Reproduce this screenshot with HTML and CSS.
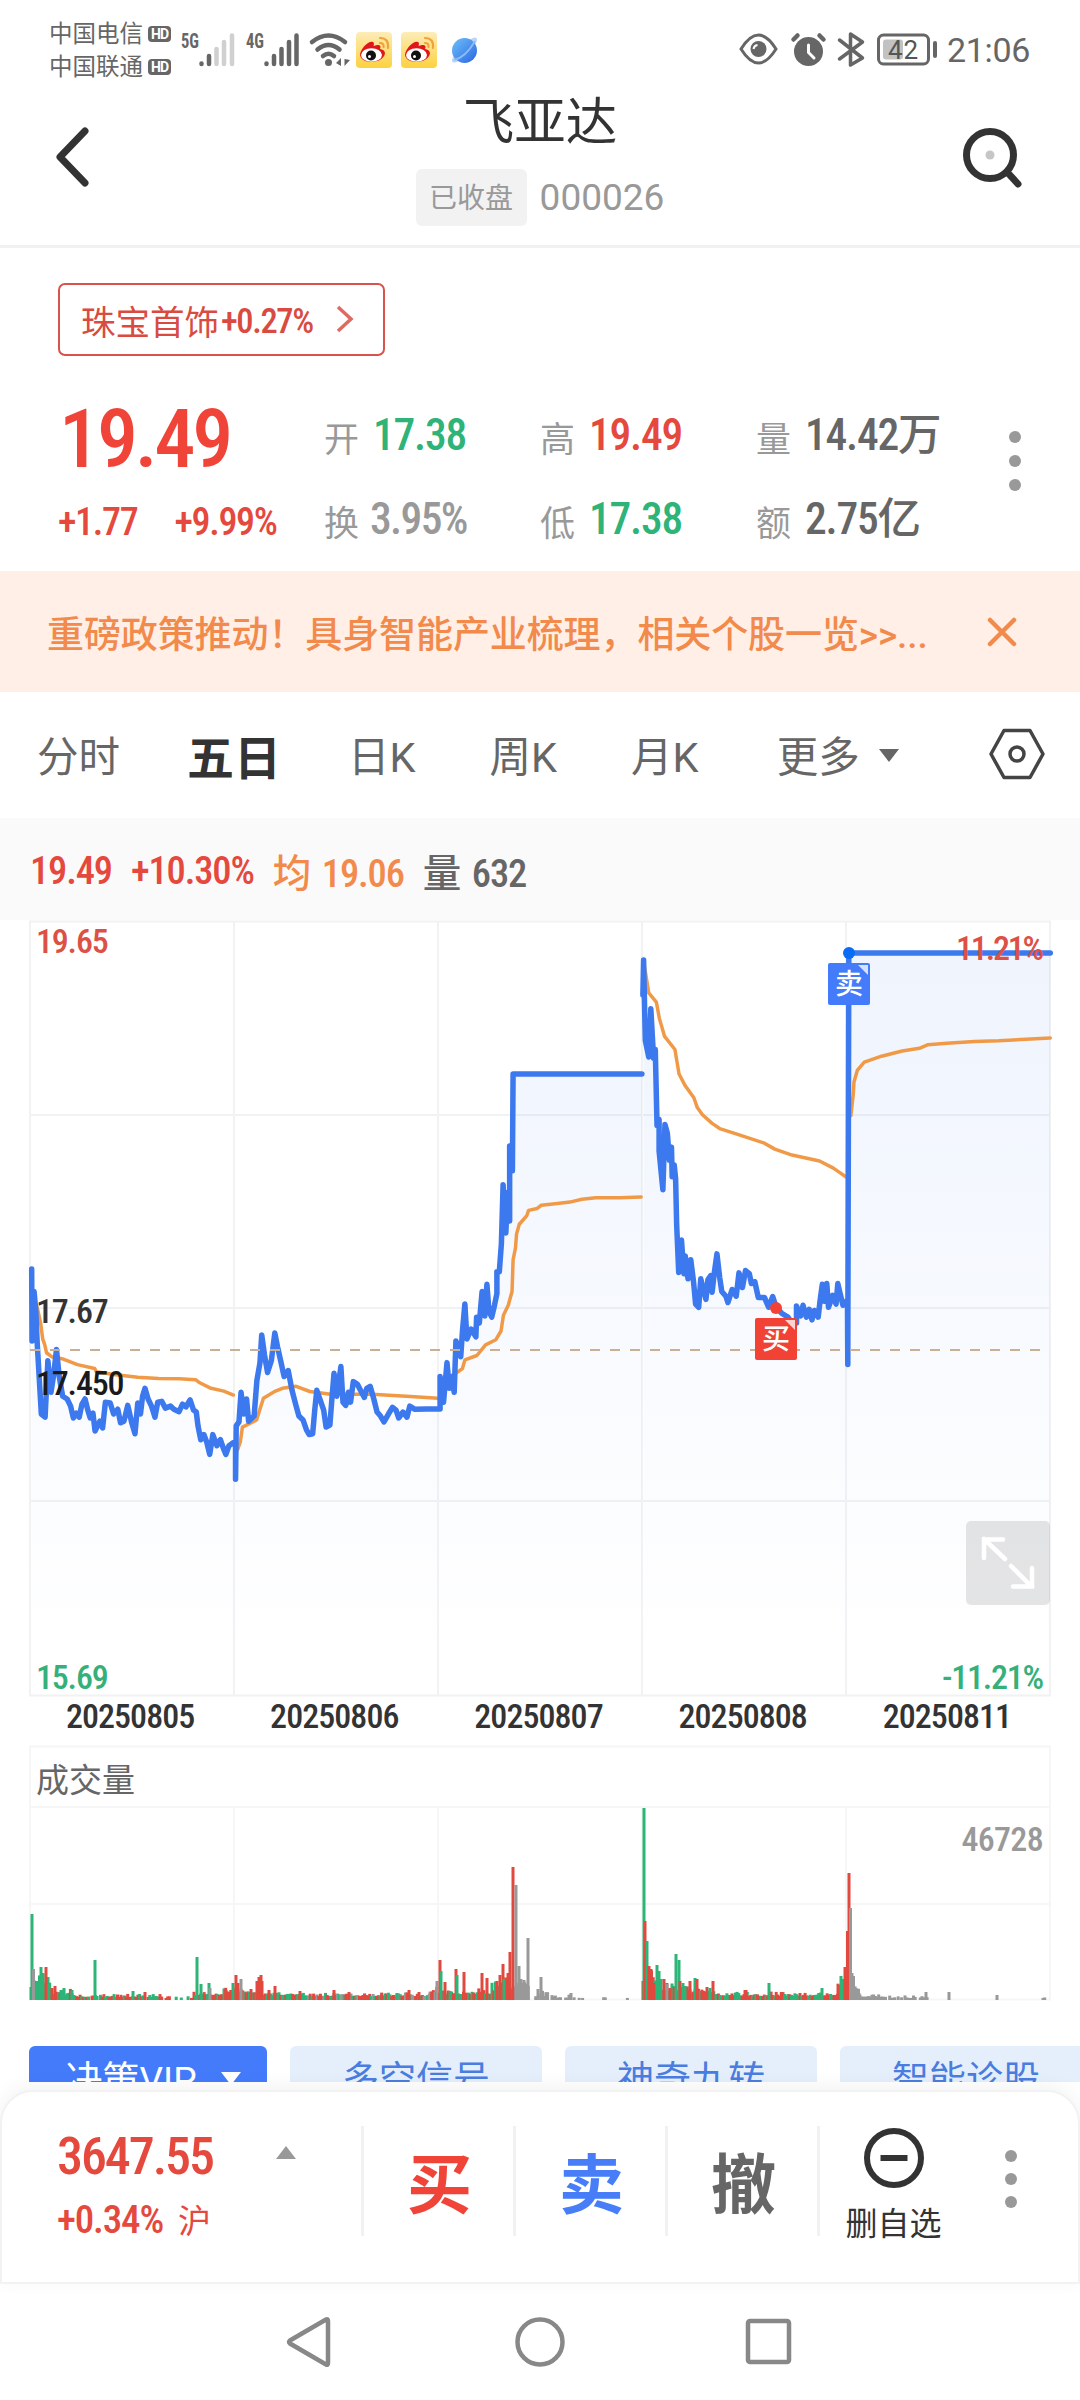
FILE: index.html
```
<!DOCTYPE html>
<html lang="zh-CN">
<head>
    <meta charset="UTF-8">
    <meta name="viewport" content="width=device-width, initial-scale=1.0">
    <title>飞亚达 000026</title>
    <link rel="stylesheet" href="styles.css">
</head>
<body>
    <div class="status-bar">
        <div class="carriers">
            <div class="carrier">中国电信<span class="hd">HD</span></div>
            <div class="carrier">中国联通<span class="hd">HD</span></div>
        </div>
        <svg class="signals" width="310" height="50" viewBox="178 25 310 50">
            <g class="net-label">
                <text x="181" y="48" textLength="18" lengthAdjust="spacingAndGlyphs">5G</text>
                <text x="246" y="48" textLength="18" lengthAdjust="spacingAndGlyphs">4G</text>
            </g>
            <g class="bars">
                <path d="M201.5 63.5V64M209 56V64"/>
                <path class="weak" d="M216.500 49V64M224 42V64M232 35.500V64"/>
                <path d="M266.500 63.500V64M274 56V64M281.500 49V64M289 42V64M296.500 35.500V64"/>
            </g>
            <!-- wifi -->
            <g class="wifi">
                <path d="M312 42Q328.500 29 345 42"/>
                <path d="M317.500 49.500Q328.500 40.500 339.500 49.500"/>
                <path d="M323 56Q328.500 51.500 334 56"/>
                <circle cx="328.500" cy="62.500" r="3.500"/>
                <path class="solid" d="M336 63L341 58V66ZM350 60L344.500 59V66Z"/>
            </g>
            <defs>
                <linearGradient id="wb" x1="0" y1="0" x2="0" y2="1"><stop offset="0" stop-color="#fdecb8"/><stop offset="1" stop-color="#fcd23f"/></linearGradient>
                <linearGradient id="pl" x1="0" y1="0" x2="1" y2="1"><stop offset="0" stop-color="#6ec0fb"/><stop offset="1" stop-color="#2a66e0"/></linearGradient>
                <g id="weibo">
                    <rect width="36" height="36" rx="4" fill="url(#wb)"/>
                    <path d="M4 23C4 17 13 8 17 10C19 11 17 14 18 14C22 12 26 13 24 17C29 18 30 21 28 24C24 32 5 32 4 23Z" fill="#e1161c"/>
                    <ellipse cx="15.500" cy="23" rx="10.500" ry="6.800" fill="#fff"/>
                    <circle cx="15" cy="23.500" r="5" fill="#111"/>
                    <circle cx="13.500" cy="24.500" r="1.500" fill="#fff"/>
                    <path d="M24 6Q33 6 32 16M24 11Q28 11 27.500 15" fill="none" stroke="#f0a33a" stroke-width="2.200" stroke-linecap="round"/>
                </g>
            </defs>
            <use href="#weibo" x="356" y="32"/>
            <use href="#weibo" x="401" y="32"/>
            <ellipse cx="464.500" cy="50" rx="17" ry="5" transform="rotate(-45 464.500 50)" fill="#bcd4fb"/>
            <circle cx="464.500" cy="50.500" r="12.500" fill="url(#pl)"/>
            <path d="M454 60Q466 57 475 41" fill="none" stroke="#8dbcfa" stroke-width="1.800"/>
        </svg>
        <div class="status-right">
            <svg width="200" height="40" viewBox="737 30 200 40">
                <path d="M741 49Q758.500 21 776 49Q758.500 77 741 49Z" fill="none" stroke="#666" stroke-width="3"/>
                <circle cx="758.500" cy="49" r="8" fill="#666"/>
                <path d="M753.500 49Q754 45.500 757.500 45" fill="none" stroke="#fff" stroke-width="2"/>
                <circle cx="808.500" cy="51.500" r="14.500" fill="#666"/>
                <path d="M793.500 39.500L797.500 35.500M823.500 39.500L819.500 35.500" stroke="#666" stroke-width="4.500" stroke-linecap="round"/>
                <path d="M808.500 45V52.500L814 58" fill="none" stroke="#fff" stroke-width="3" stroke-linecap="round"/>
                <path d="M839.500 40L862.500 58L850.500 65V34L862.500 42L839.500 59" fill="none" stroke="#666" stroke-width="3.500" stroke-linejoin="round" stroke-linecap="round"/>
                <rect x="878.500" y="35" width="50" height="29" rx="5" fill="none" stroke="#666" stroke-width="3"/>
                <rect x="883" y="39.500" width="20" height="20" rx="3" fill="#c2c2c2"/>
                <rect x="933" y="41" width="4" height="17" rx="2" fill="#666"/>
                <text x="888" y="58.500" class="battery" textLength="30">42</text>
            </svg>
            <span class="clock">21:06</span>
        </div>
    </div>

    <div class="header">
        <svg class="icon-back" width="40" height="66" viewBox="0 0 40 66">
            <path d="M32 7L7 33L32 59"/>
        </svg>
        <div class="title">
            <div class="name">飞亚达</div>
            <div class="sub"><span class="tag">已收盘</span><span class="code">000026</span></div>
        </div>
        <svg class="icon-search" width="64" height="66" viewBox="0 0 64 66">
            <circle cx="29" cy="31" r="23.500"/>
            <path d="M46 48L57 60"/>
            <circle class="dot" cx="29" cy="31" r="4.500"/>
        </svg>
    </div>

    <div class="quote">
        <div class="sector">
            <span>珠宝首饰</span><span class="num">+0.27%</span>
            <svg width="20" height="30" viewBox="0 0 20 30"><path d="M3 3L16 15L3 27"/></svg>
        </div>
        <div class="quote-grid">
            <div class="price num red">19.49</div>
            <div class="cell"><span>开</span><b class="num green">17.38</b></div>
            <div class="cell"><span>高</span><b class="num red">19.49</b></div>
            <div class="cell"><span>量</span><b class="num">14.42万</b></div>
            <div class="change num red"><span>+1.77</span><span>+9.99%</span></div>
            <div class="cell"><span>换</span><b class="num grey">3.95%</b></div>
            <div class="cell"><span>低</span><b class="num green">17.38</b></div>
            <div class="cell"><span>额</span><b class="num">2.75亿</b></div>
            <div class="dots"><i></i><i></i><i></i></div>
        </div>
    </div>

    <div class="banner">
        <span>重磅政策推动！具身智能产业梳理，相关个股一览&gt;&gt;...</span>
        <svg width="30" height="30" viewBox="0 0 30 30"><path d="M3 3L27 27M27 3L3 27"/></svg>
    </div>

    <div class="tabs">
        <span>分时</span>
        <span class="active">五日</span>
        <span>日K</span>
        <span>周K</span>
        <span>月K</span>
        <span class="more">更多<svg width="22" height="15" viewBox="0 0 22 15"><path d="M1 1H21L11 14Z"/></svg></span>
        <svg class="icon-hex" width="58" height="54" viewBox="0 0 58 54">
            <path d="M16 3.500H42L55 27L42 50.500H16L3 27Z"/>
            <circle cx="29" cy="27" r="7"/>
        </svg>
    </div>

    <div class="info num">
        <span class="red">19.49</span>
        <span class="red">+10.30%</span>
        <span class="orange">均 19.06</span>
        <span>量 632</span>
    </div>

    <div class="chart">
        <svg width="1080" height="778" viewBox="0 920 1080 778">
            <defs>
                <linearGradient id="fade" gradientUnits="userSpaceOnUse" x1="0" y1="100" x2="0" y2="1900">
                    <stop offset="0" stop-color="#3c78ee" stop-opacity=".085"/>
                    <stop offset="1" stop-color="#3c78ee" stop-opacity="0"/>
                </linearGradient>
            </defs>
            <path class="grid" d="M30 921.500H1050V1695.500H30ZM30 1115H1050M30 1308H1050M30 1501H1050M234 921.500V1695M438 921.500V1695M642 921.500V1695M846 921.500V1695"/>
            <g id="price" transform="translate(0 900) scale(.34435 .39541)"></g>
            <path class="base-line" d="M30 1350H1050"/>
            <text x="36" y="953" class="label red-t">19.65</text>
            <text x="36" y="1323" class="label dark">17.67</text>
            <text x="36" y="1394.500" class="label black">17.450</text>
            <text x="36" y="1689" class="label green-t">15.69</text>
            <text x="1043" y="960" class="label end red-t" textLength="87">11.21%</text>
            <text x="1043" y="1689" class="label end green-t" textLength="101">-11.21%</text>
            <circle cx="849" cy="953" r="6" fill="#0a6cf5"/>
            <g>
                <rect x="828" y="963" width="42" height="42" rx="2" fill="#437bfb"/>
                <path d="M858 965H868V975Z" fill="#d5e2ff"/>
                <text x="849" y="994" class="mark">卖</text>
            </g>
            <circle cx="776" cy="1308" r="6" fill="#f24236"/>
            <g>
                <rect x="755" y="1318" width="42" height="42" rx="2" fill="#f24236"/>
                <path d="M785 1320H795V1330Z" fill="#fbd3d0"/>
                <text x="776" y="1349" class="mark">买</text>
            </g>
            <rect x="966" y="1521" width="84" height="84" rx="5" fill="#000" fill-opacity=".1"/>
            <path class="expand" d="M1005 1559L984 1539M1003 1539.500H984V1558M1011 1566L1031 1586M1013 1586.500H1032V1568"/>
        </svg>
    </div>
    <div class="dates num">
        <span>20250805</span><span>20250806</span><span>20250807</span><span>20250808</span><span>20250811</span>
    </div>

    <div class="volume">
        <svg width="1080" height="258" viewBox="0 1744 1080 258">
            <path class="grid light" d="M30 1746.500H1050V1999.500H30ZM30 1807H1050M30 1904H1050M234 1807V2000M438 1807V2000M642 1807V2000M846 1807V2000"/>
            <text x="36" y="1792" class="vol-title">成交量</text>
            <text x="1043" y="1851" class="label end grey-t">46728</text>
            <g id="volume"></g>
        </svg>
    </div>

    <div class="tools">
        <div class="tool vip">决策VIP<svg width="22" height="15" viewBox="0 0 22 15"><path d="M1 1H21L11 14Z"/></svg></div>
        <div class="tool">多空信号</div>
        <div class="tool">神奇九转</div>
        <div class="tool">智能诊股</div>
    </div>

    <div class="bottom-bar">
        <div class="index">
            <div class="index-top"><span class="num red">3647.55</span>
                <svg width="22" height="15" viewBox="0 0 22 15"><path d="M11 1L21 14H1Z"/></svg></div>
            <div class="index-sub num red">+0.34%<span>沪</span></div>
        </div>
        <div class="action buy">买</div>
        <div class="action sell">卖</div>
        <div class="action cancel">撤</div>
        <div class="remove">
            <svg width="62" height="62" viewBox="0 0 62 62"><circle cx="31" cy="31" r="27"/><path d="M17.500 31H44.500"/></svg>
            <span>删自选</span>
        </div>
        <div class="dots"><i></i><i></i><i></i></div>
    </div>

    <div class="nav-bar">
        <svg width="54" height="60" viewBox="0 0 54 60"><path d="M42 7.500Q44 6.500 44 9V51Q44 53.500 42 52.500L6 31.500Q4 30 6 28.500Z"/></svg>
        <svg width="54" height="60" viewBox="0 0 54 60"><circle cx="27" cy="30" r="22.500"/></svg>
        <svg width="54" height="60" viewBox="0 0 54 60"><rect x="6" y="9" width="41" height="41" rx="2"/></svg>
    </div>

    <script>
        const NS = 'http://www.w3.org/2000/svg';
        const BOTTOM = 2012;

        // price lines, a new string starts where the line breaks
        const prices = [
            '92,933 93,1115 99,990 104,1040 108,1120 114,1210 120,1300 131,1308 139,1165 148,1245 156,1200 164,1137 172,1205 182,1255 195,1262 205,1280 213,1310 222,1298 230,1308 238,1275 247,1262 255,1290 262,1310 270,1298 276,1343 290,1318 298,1335 306,1270 320,1272 330,1300 342,1288 350,1322 360,1318 371,1278 382,1320 392,1350 400,1272 408,1300 414,1255 421,1235 430,1262 440,1280 450,1308 458,1270 470,1268 480,1285 495,1280 505,1288 520,1294 530,1275 540,1282 552,1264 562,1290 570,1295 575,1330 583,1365 592,1352 600,1370 609,1402 618,1352 630,1380 640,1365 648,1385 656,1402 665,1380 678,1372 684,1376 684,1465 686,1330 694,1320 700,1245 708,1300 716,1262 722,1318 738,1305 746,1215 755,1170 760,1100 768,1150 777,1195 788,1165 798,1095 806,1130 815,1165 825,1205 837,1190 848,1240 860,1280 868,1305 880,1315 890,1340 898,1352 908,1350 914,1290 920,1240 930,1265 940,1290 947,1333 958,1328 964,1260 970,1197 978,1255 990,1180 996,1270 1004,1278 1012,1245 1018,1270 1026,1218 1038,1225 1050,1245 1058,1258 1065,1235 1075,1230 1085,1260 1095,1295 1105,1305 1115,1320 1128,1300 1140,1283 1150,1290 1158,1310 1170,1295 1182,1308 1190,1280 1205,1288 1240,1287 1278,1287 1278,1205 1288,1270 1298,1170 1305,1235 1312,1205 1319,1245 1324,1115 1338,1155 1343,1090 1350,1022 1356,1110 1368,1085 1382,1105 1384,1055 1392,1070 1400,990 1408,1052 1414,972 1420,1040 1428,1055 1436,1025 1443,995 1443,940 1450,940 1456,870 1461,720 1469,842 1474,740 1480,812 1480,622 1488,685 1490,440 1864,440',
            '1869,152 1867,240 1869,152 1874,355 1884,397 1890,275 1898,400 1903,378 1908,570 1914,555 1914,635 1925,733 1931,568 1938,590 1944,658 1950,625 1952,700 1958,670 1962,705 1965,820 1971,942 1979,860 1986,945 1990,900 1998,958 2006,910 2014,965 2020,1022 2029,1030 2035,958 2050,1010 2056,960 2064,950 2068,992 2074,945 2082,895 2090,955 2096,990 2108,1002 2114,1018 2126,985 2138,1002 2146,943 2156,980 2165,937 2176,945 2182,970 2192,965 2202,1005 2220,1005 2232,1030 2244,1003 2254,1030 2270,1045 2288,1055 2300,1070 2313,1070 2313,1027 2325,1052 2332,1025 2342,1055 2350,1035 2358,1062 2365,1038 2376,1055 2382,1010 2388,972 2394,1015 2401,970 2406,1030 2418,1000 2428,1022 2433,970 2441,1000 2448,1025 2461,1012 2462,1175 2465,134 3050,134'
        ];
        const averages = [
            '108,1030 118,1070 124,1110 130,1125 135,1145 150,1155 180,1160 225,1175 275,1185 280,1193 330,1200 400,1207 460,1210 520,1211 568,1213 580,1221 610,1234 650,1242 678,1252',
            '690,1390 698,1370 704,1333 745,1315 765,1260 800,1242 820,1235 860,1230 900,1243 960,1250 1080,1250 1180,1255 1272,1260',
            '1290,1215 1330,1193 1343,1185 1350,1163 1385,1152 1410,1125 1440,1112 1455,1090 1462,1050 1476,1025 1487,990 1490,910 1497,880 1500,845 1508,820 1530,798 1535,785 1560,780 1572,772 1625,767 1655,764 1690,757 1730,753 1800,753 1862,751',
            '1872,170 1884,235 1906,258 1915,300 1930,345 1960,378 1972,440 1990,470 2015,500 2025,525 2040,543 2068,565 2090,578 2140,592 2220,615 2250,630 2300,645 2380,660 2420,678 2440,690 2456,700',
            '2471,545 2478,490 2480,460 2490,430 2510,410 2560,395 2620,382 2670,375 2695,366 2750,362 2830,358 2900,356 2980,352 3050,349'
        ];

        function add(parent, tag, attrs) {
            const el = document.createElementNS(NS, tag);
            for (const key in attrs) el.setAttribute(key, attrs[key]);
            parent.appendChild(el);
        }

        const priceGroup = document.getElementById('price');
        prices.forEach(p => {
            const pts = p.split(' ');
            const first = pts[0].split(',')[0];
            const last = pts[pts.length - 1].split(',')[0];
            add(priceGroup, 'polygon', { points: `${first},${BOTTOM} ${p} ${last},${BOTTOM}`, fill: 'url(#fade)' });
        });
        averages.forEach(p => add(priceGroup, 'polyline', { points: p, class: 'avg' }));
        prices.forEach(p => add(priceGroup, 'polyline', { points: p, class: 'price-line' }));

        // volume: quiet minutes first, then the larger bars on top of them
        const colors = { r: '#e1493f', g: '#2cb577', n: '#999999' };
        const volumeGroup = document.getElementById('volume');
        let seed = 7;
        function rnd() {
            seed = (seed * 16807) % 2147483647;
            return seed / 2147483647;
        }
        function bar(x, h, c) {
            add(volumeGroup, 'path', { d: `M${x} 2000V${2001 - h}`, stroke: colors[c], class: 'bar' });
        }
        // from, to, lowest, highest, share of minutes drawn, colours
        const quiet = [
            [31, 50, 14, 26, 1, 'ggr'], [50, 75, 6, 12, 1, 'ggr'], [75, 163, 4, 7, .95, 'rg'],
            [166, 192, 3, 5, .5, 'rg'], [194, 224, 6, 9, 1, 'rgr'], [224, 262, 8, 14, 1, 'rgr'],
            [262, 300, 6, 9, 1, 'rg'], [300, 430, 5, 9, 1, 'rgrgn'], [430, 438, 9, 15, 1, 'nr'],
            [438, 492, 7, 12, 1, 'rgr'], [492, 512, 10, 26, 1, 'rrg'], [513, 530, 12, 24, 1, 'n'],
            [534, 548, 4, 10, .7, 'n'], [552, 584, 3, 7, .7, 'n'], [590, 636, 3, 4, .2, 'n'],
            [643, 655, 20, 38, 1, 'rg'], [655, 690, 10, 20, 1, 'rgg'], [690, 715, 8, 13, 1, 'rg'],
            [715, 838, 5, 9, 1, 'rggr'], [838, 848, 12, 26, 1, 'rgr'], [850, 860, 10, 20, 1, 'n'],
            [860, 886, 4, 7, 1, 'n'], [888, 930, 3, 7, .6, 'n'], [930, 1040, 2, 3, .04, 'n'], [1043, 1051, 3, 4, .8, 'n']
        ];
        quiet.forEach(([from, to, lo, hi, share, set]) => {
            for (let x = from; x < to; x += 1.7) {
                const h = lo + rnd() * rnd() * (hi - lo) * 1.3;
                const c = set[Math.floor(rnd() * set.length)];
                if (rnd() < share) bar(x.toFixed(1), h.toFixed(1), c);
            }
        });
        const peaks = 'g32:87 n33.5:32 g37:20 g41:34 g43:28 r46:34 g49:17 r52:13 r55:15 g61:11 g64:13 g72:11 g95:41 g133:10 r145:9 g197:44 g201:17 g209:18 n210:13 r226:11 g233:18 r236:26 r238:18 n241:22 r251:12 r257:20 r259:24 r261:26 r262:20 r269:11 r275:15 r300:10 r334:11 r349:9 g397:8 r409:11 r419:9 n437:20 r440:41 g441:30 r445:19 g450:10 r456:32 g457:26 r464:29 r482:28 r487:23 r497:20 r500:26 r503:37 g504:22 r508:28 r510:49 r513:134 n516:116 n519:35 n521:22 n524:21 n526:17 n528:63 n538:12 n541:24 n571:8 g644:193 r645:80 g647:60 r649:35 r651:32 r654:18 g657:36 g659:30 g661:22 r664:22 n667:17 r670:13 r674:14 g676:47 g679:41 r680:20 g683:18 g685:15 r690:20 g695:23 r697:22 r707:14 g710:13 r713:20 r745:11 r746:11 g769:18 g822:13 g841:25 g843:22 r845:34 r847.5:70 r849:128 n850.500:93 n852:28 n853.500:25 n856:13 n859:8 n926:9 n949:9 n997:6';
        peaks.split(' ').forEach(p => {
            const [x, h] = p.slice(1).split(':').map(Number);
            bar(x, h, p[0]);
        });
    </script>
</body>
</html>
```
FILE: styles.css
```
* {
    box-sizing: border-box;
}
body {
    margin: 0;
    width: 1080px;
    height: 2400px;
    overflow: hidden;
    display: flex;
    flex-direction: column;
    background-color: #fff;
    color: #666;
    font-family: Roboto, "Noto Sans CJK SC", sans-serif;
}
body > div {
    flex: none;
}
svg {
    display: block;
    flex: none;
}
.num {
    font-family: "Roboto Condensed", "Noto Sans CJK SC", sans-serif;
    font-weight: 500;
    letter-spacing: -0.03em;
}
.red { color: #e5483d; }
.green { color: #2eb378; }
.grey { color: #999; }
.orange { color: #f28a4c; }

/* status bar */
.status-bar {
    height: 92px;
    display: flex;
    align-items: center;
    padding: 8px 49px 0 49px;
}
.carriers {
    width: 129px;
    padding-top: 1px;
    font-size: 23.5px;
}
.carrier {
    display: flex;
    align-items: center;
    gap: 5px;
    height: 33px;
    line-height: 33px;
    white-space: nowrap;
}
.hd {
    width: 23px;
    height: 16px;
    border-radius: 4px;
    background-color: #666;
    color: #fff;
    font-size: 14px;
    font-weight: 700;
    line-height: 17px;
    text-align: center;
    letter-spacing: -1px;
}
.net-label text {
    font-family: "Roboto Condensed", sans-serif;
    font-size: 20px;
    font-weight: 700;
    fill: #666;
}
.bars path {
    stroke: #666;
    stroke-width: 4.5;
    stroke-linecap: round;
}
.bars .weak {
    stroke: #d0d0d0;
}
.wifi path {
    fill: none;
    stroke: #666;
    stroke-width: 4.5;
    stroke-linecap: round;
}
.wifi circle, .wifi .solid {
    fill: #666;
    stroke: none;
}
.status-right {
    margin-left: auto;
    display: flex;
    align-items: center;
    gap: 10px;
}
.battery {
    font-size: 26px;
    fill: #555;
}
.clock {
    font-size: 34px;
    line-height: 40px;
    width: 84px;
    letter-spacing: -0.3px;
    white-space: nowrap;
}

/* header */
.header {
    height: 156px;
    display: flex;
    justify-content: space-between;
    border-bottom: 3px solid #f1f1f1;
    padding: 0 55px 0 53px;
}
.icon-back, .icon-search {
    margin-top: 32px;
    fill: none;
    stroke: #333;
    stroke-width: 7;
    stroke-linecap: round;
    stroke-linejoin: round;
}
.icon-search .dot {
    fill: #c6c6c6;
    stroke: none;
}
.title {
    display: flex;
    flex-direction: column;
    align-items: center;
    padding: 1px 0 0 26px;
}
.name {
    font-size: 51.5px;
    line-height: 60px;
    color: #333;
}
.sub {
    display: flex;
    align-items: center;
    gap: 13px;
    margin-top: 16px;
    color: #999;
}
.tag {
    width: 111px;
    height: 57px;
    border-radius: 6px;
    background-color: #f2f2f2;
    font-size: 28px;
    line-height: 59px;
    text-align: center;
}
.code {
    font-size: 37px;
}

/* quote */
.quote {
    height: 323px;
    padding: 35px 57px 0 58px;
}
.sector {
    width: 327px;
    height: 73px;
    border: 2px solid #d8534a;
    border-radius: 7px;
    display: flex;
    align-items: center;
    padding-left: 21px;
    font-size: 34.5px;
    color: #d94b41;
    white-space: nowrap;
}
.sector .num {
    padding-top: 3px;
    margin-left: 2px;
    letter-spacing: -0.04em;
}
.sector svg {
    margin-left: 22px;
    margin-top: -2px;
    fill: none;
    stroke: #dd6b62;
    stroke-width: 3.5;
}
.quote-grid {
    position: relative;
    margin-top: 38px;
    display: grid;
    grid-template-columns: 266px 216px 216px 200px;
    grid-template-rows: 84px 84px;
    align-items: center;
    white-space: nowrap;
}
.price {
    font-size: 82px;
    line-height: 84px;
    color: #f04438;
    padding-left: 1px;
    margin-top: 5px;
    letter-spacing: -0.038em;
}
.change {
    display: flex;
    gap: 37px;
    font-size: 38px;
    margin-top: 3px;
    letter-spacing: -0.035em;
}
.cell {
    display: flex;
    align-items: center;
    gap: 14px;
    font-size: 35px;
    color: #999;
}
.cell b {
    font-size: 43.5px;
    line-height: 50px;
    letter-spacing: -0.028em;
    color: #666;
}
.cell b.red { color: #e5483d; }
.cell b.green { color: #2eb378; }
.cell b.grey {
    color: #999;
    margin-left: -3px;
    letter-spacing: -0.038em;
}
.dots {
    display: flex;
    flex-direction: column;
    gap: 12px;
}
.dots i {
    width: 12px;
    height: 12px;
    border-radius: 50%;
    background-color: #999;
}
.quote-grid .dots {
    position: absolute;
    right: 2px;
    top: 37px;
}

/* banner */
.banner {
    height: 121px;
    background-color: #ffefe6;
    color: #f28a4c;
    display: flex;
    align-items: center;
    justify-content: space-between;
    padding: 0 63px 0 47px;
    font-size: 37px;
    font-weight: 500;
    white-space: nowrap;
    letter-spacing: -0.1px;
}
.banner svg {
    fill: none;
    stroke: #f28a4c;
    stroke-width: 4.5;
    stroke-linecap: round;
}

/* period tabs */
.tabs {
    height: 126px;
    display: flex;
    align-items: center;
    padding: 0 34px 2px 37px;
    font-size: 41.5px;
    white-space: nowrap;
}
.tabs > span {
    margin-right: 74px;
}
.tabs > span:first-child, .tabs > span.active {
    margin-right: 67px;
}
.tabs .active {
    font-size: 47px;
    font-weight: 700;
    color: #333;
}
.tabs .more {
    display: flex;
    align-items: center;
    gap: 18px;
    margin-left: 4px;
    margin-right: 0;
}
.more svg {
    fill: #666;
    margin-top: 3px;
}
.icon-hex {
    margin-left: auto;
    fill: none;
    stroke: #444;
    stroke-width: 3.5;
    stroke-linejoin: round;
}
.info {
    height: 102px;
    background-color: #fafafa;
    display: flex;
    align-items: center;
    gap: 19px;
    padding: 2px 0 0 30px;
    font-size: 38.5px;
    letter-spacing: -0.03em;
    word-spacing: 4px;
}

/* charts */
.chart {
    height: 778px;
}
.grid {
    fill: none;
    stroke: #f1f2f4;
    stroke-width: 2;
}
.grid.light {
    stroke: #f6f6f6;
}
.price-line, .avg {
    fill: none;
    vector-effect: non-scaling-stroke;
    stroke-linejoin: round;
    stroke-linecap: round;
}
.price-line {
    stroke: #3c78ee;
    stroke-width: 5.5;
}
.avg {
    stroke: #f09a48;
    stroke-width: 3.5;
}
.base-line {
    stroke: #c9b094;
    stroke-width: 2.2;
    stroke-dasharray: 10 10;
}
.label {
    font-family: "Roboto Condensed", sans-serif;
    font-size: 34px;
    font-weight: 500;
    letter-spacing: -0.035em;
}
.end {
    text-anchor: end;
}
.dark { fill: #333; }
.black { fill: #1a1a1a; }
.red-t { fill: #dc5046; }
.green-t { fill: #35b07a; }
.grey-t {
    fill: #999;
    letter-spacing: -0.02em;
}
.mark {
    font-size: 28px;
    font-weight: 500;
    fill: #fff;
    text-anchor: middle;
}
.expand {
    fill: none;
    stroke: #fff;
    stroke-width: 4.5;
    stroke-linecap: round;
}
.dates {
    height: 46px;
    padding: 0 31px 0 28px;
    display: grid;
    grid-template-columns: repeat(5, 1fr);
    text-align: center;
    font-size: 34px;
    line-height: 36px;
    color: #333;
    letter-spacing: -0.028em;
}
.volume {
    height: 258px;
}
.vol-title {
    font-size: 33px;
    fill: #666;
}
.bar {
    stroke-width: 3;
    stroke-linecap: butt;
}

/* tool buttons, cut off by the bottom bar */
.tools {
    height: 80px;
    padding: 44px 0 0 29px;
    display: flex;
    gap: 23px;
    overflow: hidden;
}
.tool {
    flex: none;
    width: 252px;
    height: 69px;
    border-radius: 6px;
    background-color: #e5effc;
    color: #4a7de0;
    font-size: 37px;
    line-height: 69px;
    text-align: center;
}
.vip {
    width: 238px;
    background-color: #437bfb;
    color: #fff;
    display: flex;
    align-items: center;
    justify-content: center;
    gap: 24px;
    padding-left: 12px;
}
.vip svg {
    fill: #fff;
    margin-top: -4px;
}

/* bottom bar */
.bottom-bar {
    height: 194px;
    margin-top: 8px;
    background-color: #fff;
    border: 2px solid #f2f2f2;
    border-radius: 33px 33px 0 0;
    box-shadow: 0 -4px 20px rgba(0, 0, 0, 0.05);
    display: flex;
    padding-top: 34px;
}
.index {
    width: 359px;
    height: 110px;
    padding-left: 55px;
}
.index-top {
    display: flex;
    justify-content: space-between;
    align-items: center;
    height: 60px;
    padding-right: 64px;
    font-size: 52px;
}
.index-top .num {
    letter-spacing: -0.04em;
}
.index-top svg {
    fill: #999;
    margin-top: -8px;
}
.index-sub {
    font-size: 39px;
    line-height: 50px;
    margin-top: 9px;
}
.index-sub span {
    font-size: 33px;
    font-weight: 400;
    margin-left: 15px;
}
.action {
    width: 152px;
    height: 110px;
    border-left: 3px solid #f1f1f1;
    padding-left: 2px;
    font-size: 65px;
    font-weight: 700;
    line-height: 120px;
    text-align: center;
}
.buy { color: #f04438; }
.sell { color: #477ef8; }
.cancel { color: #666; }
.remove {
    width: 150px;
    height: 110px;
    border-left: 3px solid #f1f1f1;
    display: flex;
    flex-direction: column;
    align-items: center;
}
.remove svg {
    margin-top: 1px;
    fill: none;
    stroke: #333;
    stroke-width: 6;
}
.remove span {
    font-size: 32px;
    line-height: 40px;
    margin-top: 15px;
    color: #333;
    white-space: nowrap;
}
.bottom-bar .dots {
    margin: 24px 0 0 38px;
    gap: 11px;
}

/* android navigation */
.nav-bar {
    height: 116px;
    display: flex;
    justify-content: center;
    align-items: center;
    gap: 175px;
    fill: none;
    stroke: #888;
    stroke-width: 4.5;
}
```
